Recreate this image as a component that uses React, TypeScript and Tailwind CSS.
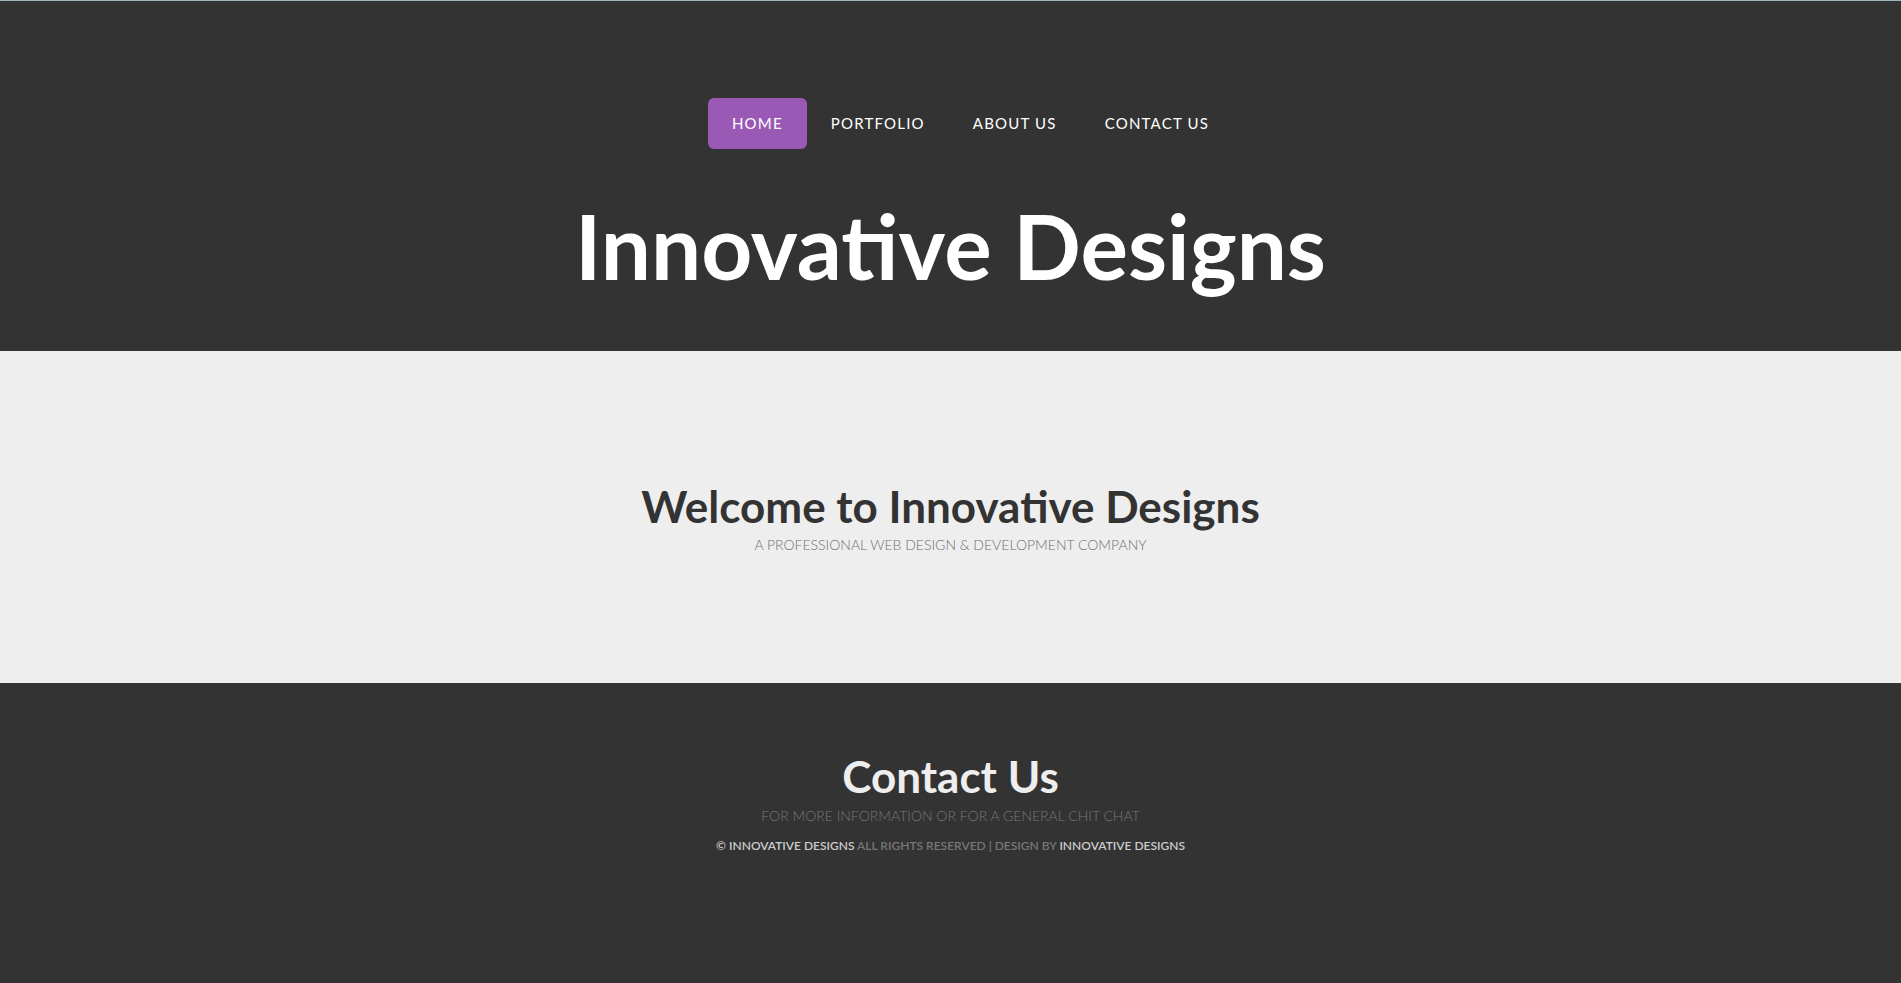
const navItems = ["HOME", "PORTFOLIO", "ABOUT US", "CONTACT US"];

export default function App() {
  return (
    <div className="flex min-h-screen flex-col bg-[#333] font-['Lato','Open_Sans',sans-serif]">
      <header className="border-t border-[#9fb3bb] bg-[#333] pt-[97px] text-center">
        <nav className="ml-[40px] flex justify-center">
          {navItems.map((item, i) => (
            <a
              key={item}
              href="#"
              className={`flex h-[51px] items-center rounded-md px-6 text-[15px] font-normal tracking-[1.2px] text-white ${
                i === 0 ? "bg-[#9b59b6]" : ""
              }`}
            >
              {item}
            </a>
          ))}
        </nav>
        <h1 className="pb-[56px] pt-[48px] text-[89px] font-bold leading-[1.1] text-white">
          Innovative Designs
        </h1>
      </header>

      <section className="flex h-[332px] flex-col items-center justify-center bg-[#eee]">
        <h2 className="text-[44px] font-bold leading-tight text-[#333]">
          Welcome to Innovative Designs
        </h2>
        <p className="text-[14px] font-light text-[#6f6f6f]">
          A PROFESSIONAL WEB DESIGN &amp; DEVELOPMENT COMPANY
        </p>
      </section>

      <footer className="flex-1 bg-[#333] pt-[66px] text-center">
        <h2 className="text-[44px] font-bold leading-tight text-[#eee]">Contact Us</h2>
        <p className="mt-[1px] text-[14px] font-light text-[#777]">
          FOR MORE INFORMATION OR FOR A GENERAL CHIT CHAT
        </p>
        <p className="mt-[11px] text-[12px] font-semibold text-[#777]">
          <span className="text-[#ccc]">© INNOVATIVE DESIGNS</span> ALL RIGHTS RESERVED |
          DESIGN BY <span className="text-[#ccc]">INNOVATIVE DESIGNS</span>
        </p>
      </footer>
    </div>
  );
}
